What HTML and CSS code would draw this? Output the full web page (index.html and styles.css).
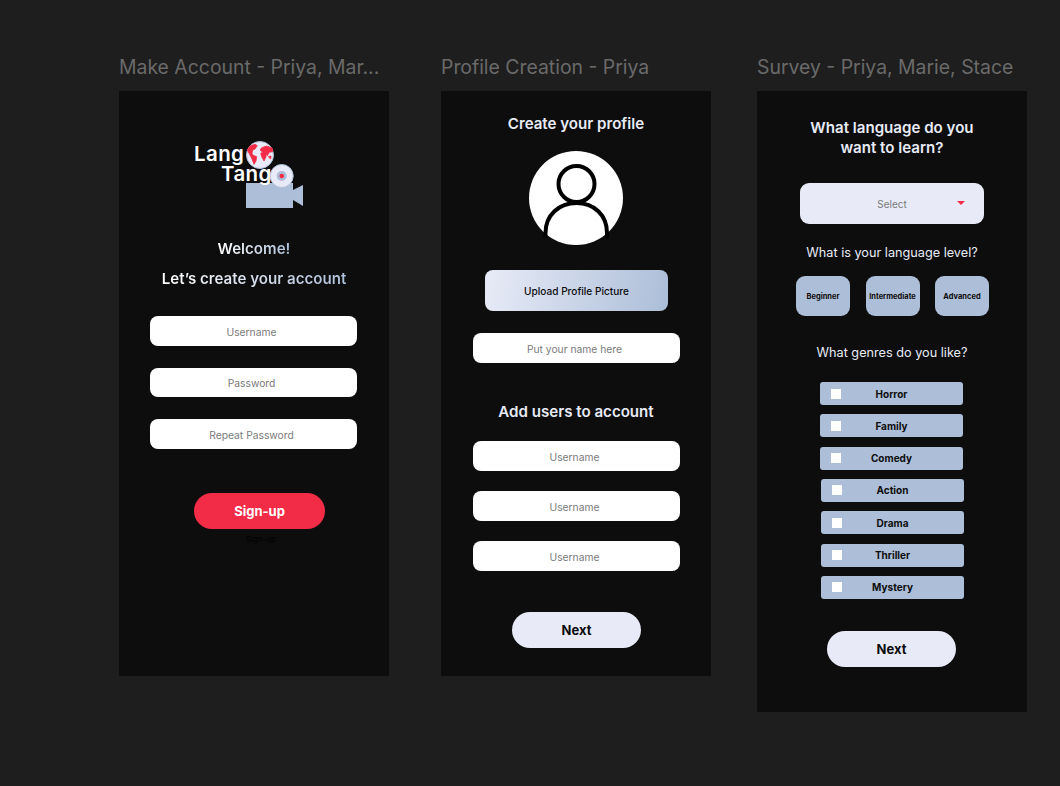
FILE: index.html
```html
<!DOCTYPE html>
<html lang="en">
<head>
<meta charset="utf-8">
<title>Lango Tango screens</title>
<link rel="stylesheet" href="styles.css">
</head>
<body>
<main class="canvas">
  <section class="column">
    <h2 class="frame-label">Make Account - Priya, Mar...</h2>
    <div class="frame frame-account">
      <svg class="logo" width="110" height="70" viewBox="0 0 110 70" role="img" aria-label="Lang Tango logo">
        <rect x="52" y="43" width="47" height="25" fill="#acbed8"/>
        <path d="M99 50 L109 45 V66 L99 60 Z" fill="#acbed8"/>
        <circle cx="66" cy="15" r="13.500" fill="#e8ebf7" stroke="#acbed8" stroke-width="1"/>
        <g class="map">
          <path d="M53.300 10 L56 6 L61 4.300 L63.300 5.700 L61 9 L58.700 10 L58 13.300 L58.700 15 L62.700 16.700 L62 21 L60 24.300 L58 19 L56 15 Z"/>
          <path d="M66 10 L67.700 7.700 L72.700 6 L78.300 8.300 L78.700 11.700 L75.300 12.300 L73.300 15.700 L72 13.300 L72 16.700 L70 21 L67.700 16.700 L66.700 13.300 L68.700 12.300 Z"/>
          <path d="M74.300 16.700 L77 16 L76.700 19 Z"/>
        </g>
        <circle cx="87.700" cy="36" r="11.500" fill="#e8ebf7" stroke="#acbed8" stroke-width="1"/>
        <circle cx="87.700" cy="36" r="5" fill="#acbed8"/>
        <circle cx="87.700" cy="36" r="2.300" fill="#f22b47"/>
        <text class="logo-text" x="0" y="20.500">Lang</text>
        <text class="logo-text" x="27" y="41">Tang</text>
      </svg>
      <p class="heading gradient-text welcome">Welcome!</p>
      <p class="heading gradient-text create">Let’s create your account</p>
      <div class="fields fields-account">
        <div class="field">Username</div>
        <div class="field">Password</div>
        <div class="field">Repeat Password</div>
      </div>
      <div class="pill pill-red">Sign-up</div>
      <p class="ghost">Sign-up</p>
    </div>
  </section>

  <section class="column">
    <h2 class="frame-label">Profile Creation - Priya</h2>
    <div class="frame frame-profile">
      <p class="heading profile-title">Create your profile</p>
      <svg class="avatar" width="94" height="94" viewBox="0 0 94 94" role="img" aria-label="Profile picture placeholder">
        <circle cx="47" cy="47" r="47" fill="#fff"/>
        <circle cx="47.500" cy="33" r="18" fill="none" stroke="#000" stroke-width="4"/>
        <path d="M16.500 85 V82 C16.500 64 30 52 47.500 52 C65 52 78 64 78 82 V85" fill="none" stroke="#000" stroke-width="4" stroke-linecap="round"/>
      </svg>
      <div class="upload">Upload Profile Picture</div>
      <div class="field name-field">Put your name here</div>
      <p class="heading add-users">Add users to account</p>
      <div class="fields fields-users">
        <div class="field">Username</div>
        <div class="field">Username</div>
        <div class="field">Username</div>
      </div>
      <div class="pill pill-light next-profile">Next</div>
    </div>
  </section>

  <section class="column">
    <h2 class="frame-label">Survey - Priya, Marie, Stace</h2>
    <div class="frame frame-survey">
      <p class="heading survey-title">What language do you<br>want to learn?</p>
      <div class="select">
        <span class="select-text">Select</span>
        <span class="select-caret"></span>
      </div>
      <p class="question level-question">What is your language level?</p>
      <div class="levels">
        <div class="level">Beginner</div>
        <div class="level">Intermediate</div>
        <div class="level">Advanced</div>
      </div>
      <p class="question genre-question">What genres do you like?</p>
      <ul class="genres">
        <li class="genre"><span class="check"></span><span class="genre-name">Horror</span></li>
        <li class="genre"><span class="check"></span><span class="genre-name">Family</span></li>
        <li class="genre"><span class="check"></span><span class="genre-name">Comedy</span></li>
        <li class="genre genre-shift"><span class="check"></span><span class="genre-name">Action</span></li>
        <li class="genre genre-shift"><span class="check"></span><span class="genre-name">Drama</span></li>
        <li class="genre genre-shift"><span class="check"></span><span class="genre-name">Thriller</span></li>
        <li class="genre genre-shift"><span class="check"></span><span class="genre-name">Mystery</span></li>
      </ul>
      <div class="pill pill-light next-survey">Next</div>
    </div>
  </section>
</main>
</body>
</html>
```
FILE: styles.css
```css
* { box-sizing: border-box; }
html, body { margin: 0; padding: 0; }
body {
  width: 1060px;
  height: 786px;
  overflow: hidden;
  background: #1e1e1e;
  font-family: "Inter", "Liberation Sans", sans-serif;
}
p, h2, ul { margin: 0; padding: 0; }

.canvas {
  display: flex;
  align-items: flex-start;
  gap: 52px;
  padding: 55px 0 0 119px;
}
.column { width: 270px; flex: none; }
.column:last-child { margin-left: -6px; }
.frame-label {
  height: 36px;
  font: 400 19.400px/24px "Inter", sans-serif;
  color: #6a6a6a;
  white-space: nowrap;
}
.frame {
  width: 270px;
  height: 585px;
  background: #0d0d0d;
  display: flex;
  flex-direction: column;
}
.frame-survey { height: 621px; }

.heading {
  font-weight: 600;
  font-size: 15.100px;
  line-height: 20px;
  color: #e8ebf7;
  text-align: center;
}
.gradient-text {
  background: linear-gradient(90deg, #fff 0%, #acbed8 100%);
  -webkit-background-clip: text;
  background-clip: text;
  color: transparent;
}

/* account */
.logo { margin: 49px 0 0 75px; flex: none; display: block; overflow: visible; }
.map { fill: #f22b47; stroke: #f22b47; stroke-width: 0.800; stroke-linejoin: round; }
.logo-text {
  font: 600 20.500px "Inter", sans-serif;
  letter-spacing: 0.400px;
  fill: #fff;
}
.welcome { margin-top: 29px; align-self: center; }
.create { margin-top: 10px; align-self: center; }
.fields { display: flex; flex-direction: column; margin-left: 32px; }
.fields-account { margin-top: 27px; gap: 22px; margin-left: 31px; }
.fields-users { margin-top: 18.500px; gap: 20px; }
.fields-users .field { height: 30px; }

.field {
  width: 207px;
  height: 29.500px;
  background: #fff;
  border-radius: 8px;
  display: flex;
  align-items: center;
  justify-content: center;
  padding: 2px 4px 0 0;
  font-size: 10.300px;
  color: #7b7b7b;
}
.pill {
  height: 36.500px;
  border-radius: 19px;
  display: flex;
  align-items: center;
  justify-content: center;
  font-weight: 700;
  font-size: 13px;
}
.pill-red {
  width: 131px;
  margin: 44px 0 0 75px;
  background: #f22b47;
  color: #fff;
}
.pill-light { width: 129px; background: #e8ebf7; color: #0d0d0d; }
.ghost {
  margin: 4px 0 0 127px;
  font-size: 8px;
  line-height: 12px;
  color: #000;
}

/* profile */
.profile-title { margin-top: 23px; }
.avatar { margin: 17px 0 0 88px; display: block; flex: none; }
.upload {
  width: 183px;
  height: 41px;
  margin: 25px 0 0 44px;
  border-radius: 8px;
  background: linear-gradient(100deg, #e8ebf7 0%, #acbed8 100%);
  display: flex;
  align-items: center;
  justify-content: center;
  font-size: 10.100px;
  font-weight: 500;
  color: #0d0d0d;
}
.name-field { margin: 22px 0 0 32px; }
.add-users { margin-top: 39.500px; }
.next-profile { margin: 41px 0 0 71px; }

/* survey */
.survey-title { margin-top: 27px; }
.select {
  position: relative;
  width: 184px;
  height: 41px;
  margin: 25px 0 0 43px;
  border-radius: 9px;
  background: #e8ebf7;
  display: flex;
  align-items: center;
  justify-content: center;
}
.select-text { font-size: 10px; color: #7b7b7b; }
.select-caret {
  position: absolute;
  right: 19px;
  top: 18px;
  width: 0;
  height: 0;
  border-left: 4px solid transparent;
  border-right: 4px solid transparent;
  border-top: 4.500px solid #f22b47;
}
.question {
  font-size: 12.700px;
  line-height: 18px;
  color: #e8ebf7;
  text-align: center;
}
.level-question { margin-top: 19.500px; }
.levels { display: flex; gap: 15.500px; margin: 14.500px 0 0 39px; }
.level {
  width: 54px;
  height: 40px;
  border-radius: 9px;
  background: #acbed8;
  display: flex;
  align-items: center;
  justify-content: center;
  font-size: 7.500px;
  font-weight: 700;
  color: #0d0d0d;
  white-space: nowrap;
}
.genre-question { margin-top: 27.500px; }
.genres { list-style: none; margin: 20.500px 0 0 63px; display: flex; flex-direction: column; gap: 9.333px; }
.genre {
  position: relative;
  width: 143px;
  height: 23px;
  border-radius: 3px;
  background: #acbed8;
  display: flex;
  align-items: center;
}
.genre-shift { margin-left: 1px; }
.check {
  width: 10px;
  height: 10px;
  margin-left: 11px;
  background: #fff;
  flex: none;
}
.genre-name {
  position: absolute;
  left: 0;
  right: 0;
  text-align: center;
  font-size: 10px;
  font-weight: 700;
  color: #0d0d0d;
}
.next-survey { margin: 32px 0 0 70px; }
```
